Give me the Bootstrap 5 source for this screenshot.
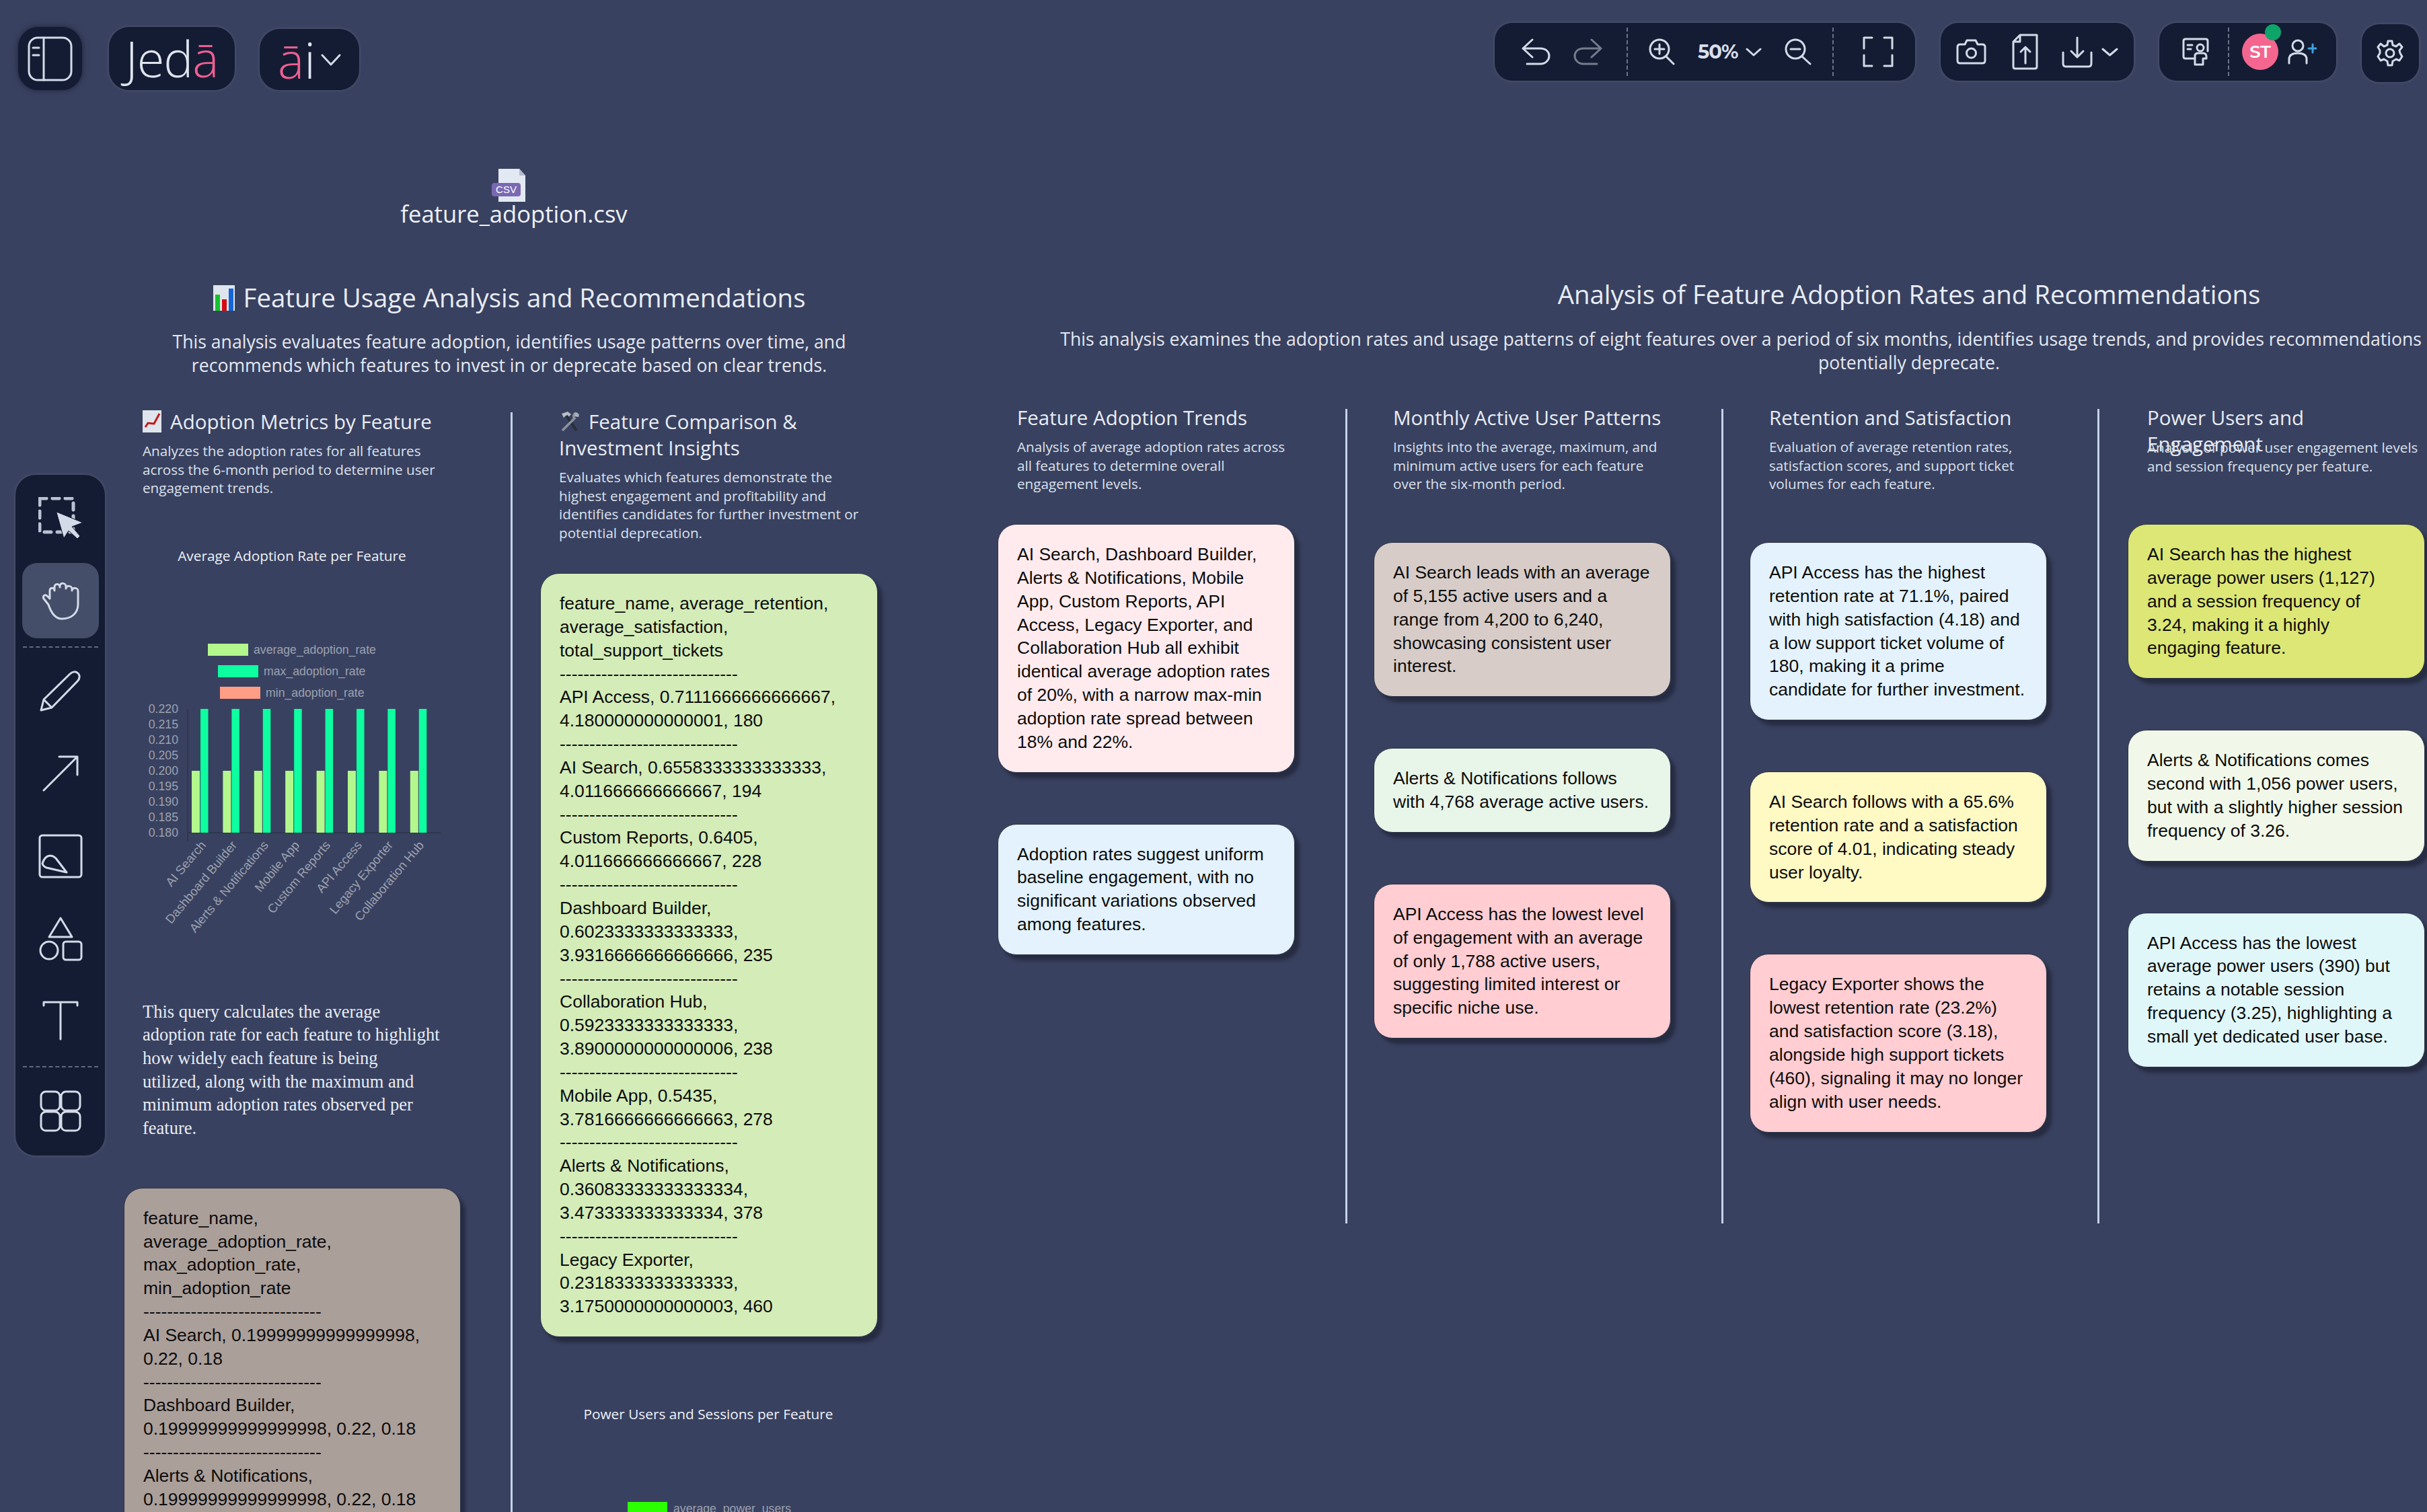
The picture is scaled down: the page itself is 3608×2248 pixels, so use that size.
<!DOCTYPE html>
<html lang="en">
<head>
  <meta charset="UTF-8">
  <title>Jedai canvas</title>
  <link href="https://cdn.jsdelivr.net/npm/bootstrap@5.3.0/dist/css/bootstrap.min.css" rel="stylesheet">
  <style>
    html, body { margin: 0; height: 100%; overflow: hidden; background: #394160; }
    .board { width: 3608px; height: 2248px; position: relative; overflow: hidden; background: #394160; font-family: "Open Sans", "Noto Sans", sans-serif; color: #e8edf5; }

    /* top bars */
    .top-strip { padding: 34px 12px 0 27px; }
    .dark-pill { background: #141c33; box-shadow: 0 0 5px rgba(255,255,255,.14); border-radius: 26px; }
    .ic { stroke: #d3dbe9; fill: none; stroke-width: 3; stroke-linecap: round; stroke-linejoin: round; display: block; flex: none; }
    .side-btn { width: 95px; height: 94px; margin-top: 6px; border-radius: 30px; box-shadow: 0 0 8px rgba(10,15,30,.6); }
    .logo-btn { width: 187px; height: 94px; margin: 6px 0 0 40px; border-radius: 30px; font-size: 74px; font-weight: 350; line-height: 1; color: #dfe5ef; letter-spacing: -1px; }
    .ai-btn { width: 148px; height: 91px; margin: 9px 0 0 37px; border-radius: 30px; font-size: 74px; font-weight: 350; line-height: 1; color: #dfe5ef; }
    .pink-txt { color: #ee5f92; }
    .bar-group { height: 86px; gap: 0; }
    .g-hist { width: 625px; }
    .g-file { width: 287px; padding-left: 23px; }
    .g-share { width: 263px; padding-left: 34px; }
    .g-gear { width: 85px; padding-left: 22px; margin-top: 2px; }
    .right-cluster { gap: 38px; }
    .seg-a { width: 196px; padding-left: 40px; gap: 34px; }
    .seg-b { width: 304px; padding-left: 31px; gap: 34px; }
    .seg-c { padding-left: 43px; }
    .dash-sep { height: 72px; width: 0; border-left: 2px dashed #6a7389; flex: none; }
    .zoom-val { font-family: "Montserrat", "Inter", sans-serif; font-weight: 700; font-size: 29px; color: #d8dfec; width: 59px; letter-spacing: -1px; }
    .chev-tight { margin-left: -22px; }
    .ml-38 { margin-left: 38px; }
    .ml-35 { margin-left: 35px; }
    .ml-13 { margin-left: 13px; }
    .ml-28 { margin-left: 28px; }
    .ml-19 { margin-left: 19px; }
    .ml-14 { margin-left: 14px; }
    .user-dot { width: 54px; height: 54px; border-radius: 50%; background: #f4668f; color: #fff; font-family: "Montserrat", "Inter", sans-serif; font-size: 26px; font-weight: 600; position: relative; flex: none; }
    .online-dot { position: absolute; width: 24px; height: 24px; border-radius: 50%; background: #0ea56a; top: -14px; right: -4px; }

    /* tool rail */
    .tool-rail { left: 23px; top: 706px; width: 133px; height: 1012px; border-radius: 30px; }
    .tool-cell { width: 100%; flex: none; }
    .h-131 { height: 131px; }
    .h-123 { height: 123px; }
    .h-120 { height: 120px; }
    .h-130 { height: 130px; }
    .tool-on { width: 114px; height: 112px; flex: none; background: #454e68; border-radius: 22px; }
    .rail-sep { width: 112px; flex: none; border-top: 2px dashed #5f6980; }
    .rail-sep-a { margin-top: 12px; margin-bottom: 2px; }
    .rail-sep-b { margin-top: 8px; }

    /* file node */
    .file-node { left: 594px; top: 251px; width: 340px; }
    .file-name { font-size: 34.6px; line-height: 33px; font-weight: 500; color: #eef2f8; white-space: nowrap; }
    .file-ico { margin-left: -16px; }

    /* analysis sections */
    .sec-left { left: 184px; top: 417px; width: 1146px; }
    .sec-right { left: 1483px; top: 412px; width: 2710px; }
    .sec-title { font-size: 38.4px; line-height: 50px; font-weight: 400; margin: 0; color: #e8edf5; }
    .sec-intro { font-size: 26.6px; line-height: 35px; margin: 0; color: #e4e9f2; }
    .sec-left .sec-intro { margin-top: 24px; }
    .sec-right .sec-intro { margin-top: 25px; }
    .sec-left .col-row { margin-top: 46px; }
    .sec-right .col-row { margin-top: 51px; }
    .emoji-ico { display: inline-block; vertical-align: -5px; margin-right: 13px; }

    .col-row { display: flex; align-items: stretch; }
    .col-wide { width: 500px; flex: none; }
    .col-std { width: 442px; flex: none; }
    .rule-v { width: 3px; flex: none; background: #c5d3e8; }
    .sec-left .rule-v { margin: 6px 41px 0 75px; height: 1900px; }
    .sec-right .rule-v { margin: 0 39px 0 75px; height: 1211px; }
    .sec-right .rule-last { margin-right: 42px; }

    .col-title { font-size: 29.5px; line-height: 39px; font-weight: 400; margin: 0; color: #e8edf5; }
    .col-note { font-size: 20.7px; line-height: 27.5px; margin: 0; color: #dbe2ed; }
    .pad-text { padding-left: 29px; }
    .sec-left .pad-text { padding-left: 28px; }
    .sec-left .col-note { margin-top: 11px; }
    .sec-right .col-title { height: 48px; }
    .sec-right .col-note { margin-top: 2px; }
    .col-head-a { height: 178px; margin-top: -7px; }
    .col-head-b { height: 205px; margin-top: -7px; }
    .w-title { width: 390px; }
    .sec-right .col-note-power { margin-top: 3px; }

    .note-stack { display: flex; flex-direction: column; gap: 76px; }
    .note-box { border: 1px solid #2c3146; border-radius: 28px; box-shadow: 7px 8px 5px #262c42; color: #0c0c0c; font-family: "Liberation Sans", Arial, sans-serif; font-size: 26.5px; line-height: 34.85px; }
    .note-box .card-body { padding: 27px 28px; }
    .bg-rose { background: #ffebee; }
    .bg-sky { background: #e3f2fd; }
    .bg-taupe { background: #d7ccc8; }
    .bg-mint { background: #e8f5e9; }
    .bg-salmon { background: #ffcdd2; }
    .bg-butter { background: #fff9c4; }
    .bg-lime { background: #dce775; }
    .bg-pale { background: #f1f8e9; }
    .bg-aqua { background: #e0f7fa; }
    .bg-leaf { background: #d4ecb8; }
    .bg-tan { background: #ab9f9a; }

    .chart-a { display: block; margin-top: 61px; }
    .chart-b { display: block; margin-top: 72px; }
    .chart-head { font-family: "Open Sans", sans-serif; font-size: 20.8px; fill: #eef2f8; text-anchor: middle; }
    .chart-tick { font-family: "Liberation Sans", Arial, sans-serif; font-size: 17.7px; fill: #9ba1af; }
    .chart-cat { font-family: "Liberation Sans", Arial, sans-serif; font-size: 18.5px; fill: #9ba1af; }
    .query-note { font-family: "Liberation Serif", "Times New Roman", serif; font-size: 26.5px; line-height: 34.7px; color: #e8edf5; margin: 26px 0 0 28px; }
    .data-box { width: 501px; margin-top: 71px; }
    .data-box-b { width: 502px; margin-top: 46px; }
    .data-box .card-body, .data-box-b .card-body { padding: 27px 28px; }
  </style>
</head>
<body>
<div class="board">

  <!-- left section -->
  <section class="position-absolute sec-left">
    <h2 class="sec-title text-center">
      <svg class="emoji-ico" width="32" height="38" viewBox="0 0 32 38"><rect width="32" height="38" fill="#dfe5ec"/><rect x="3" y="14" width="7" height="24" fill="#17c22c"/><rect x="13" y="21" width="7" height="17" fill="#d40d12"/><rect x="23" y="5" width="7" height="33" fill="#1565d8"/></svg>Feature Usage Analysis and Recommendations
    </h2>
    <p class="sec-intro text-center">This analysis evaluates feature adoption, identifies usage patterns over time, and<br>recommends which features to invest in or deprecate based on clear trends.</p>
    <div class="col-row">
      <div class="col-wide">
        <div class="pad-text">
          <h3 class="col-title"><svg class="emoji-ico" width="28" height="33" viewBox="0 0 28 33"><rect width="28" height="33" fill="#dfe5ec"/><path d="M4 25 L8 19 L17 20 L25 5" fill="none" stroke="#c9161a" stroke-width="3"/></svg>Adoption Metrics by Feature</h3>
          <p class="col-note">Analyzes the adoption rates for all features<br>across the 6-month period to determine user<br>engagement trends.</p>
        </div>
        <svg class="chart-a" width="500" height="660" viewBox="184 800 500 660">
          <text class="chart-head" x="434" y="833">Average Adoption Rate per Feature</text>
          <rect x="309" y="956" width="60" height="18" fill="#b3f78d"/>
          <text class="chart-tick" x="377" y="971">average_adoption_rate</text>
          <rect x="324" y="988" width="60" height="18" fill="#0dffa0"/>
          <text class="chart-tick" x="392" y="1003">max_adoption_rate</text>
          <rect x="327" y="1020" width="60" height="18" fill="#ff9d85"/>
          <text class="chart-tick" x="395" y="1035">min_adoption_rate</text>
          <path d="M279 1053V1250M279 1237H655" stroke="#2f3650" stroke-width="2" fill="none"/>
          <g text-anchor="end">
            <text class="chart-tick" x="265" y="1059">0.220</text>
            <text class="chart-tick" x="265" y="1082">0.215</text>
            <text class="chart-tick" x="265" y="1105">0.210</text>
            <text class="chart-tick" x="265" y="1128">0.205</text>
            <text class="chart-tick" x="265" y="1151">0.200</text>
            <text class="chart-tick" x="265" y="1174">0.195</text>
            <text class="chart-tick" x="265" y="1197">0.190</text>
            <text class="chart-tick" x="265" y="1220">0.185</text>
            <text class="chart-tick" x="265" y="1243">0.180</text>
          </g>
          <g fill="#b3f78d">
            <rect x="285" y="1145" width="12" height="92"/><rect x="331.4" y="1145" width="12" height="92"/><rect x="377.8" y="1145" width="12" height="92"/><rect x="424.2" y="1145" width="12" height="92"/><rect x="470.6" y="1145" width="12" height="92"/><rect x="517" y="1145" width="12" height="92"/><rect x="563.4" y="1145" width="12" height="92"/><rect x="609.8" y="1145" width="12" height="92"/>
          </g>
          <g fill="#0dffa0">
            <rect x="298" y="1053" width="11.5" height="184"/><rect x="344.4" y="1053" width="11.5" height="184"/><rect x="390.8" y="1053" width="11.5" height="184"/><rect x="437.2" y="1053" width="11.5" height="184"/><rect x="483.6" y="1053" width="11.5" height="184"/><rect x="530" y="1053" width="11.5" height="184"/><rect x="576.4" y="1053" width="11.5" height="184"/><rect x="622.8" y="1053" width="11.5" height="184"/>
          </g>
          <g text-anchor="end">
            <text class="chart-cat" transform="translate(307 1256) rotate(-50)">AI Search</text>
            <text class="chart-cat" transform="translate(353 1256) rotate(-50)">Dashboard Builder</text>
            <text class="chart-cat" transform="translate(400 1256) rotate(-50)">Alerts &amp; Notifications</text>
            <text class="chart-cat" transform="translate(446 1256) rotate(-50)">Mobile App</text>
            <text class="chart-cat" transform="translate(492 1256) rotate(-50)">Custom Reports</text>
            <text class="chart-cat" transform="translate(539 1256) rotate(-50)">API Access</text>
            <text class="chart-cat" transform="translate(585 1256) rotate(-50)">Legacy Exporter</text>
            <text class="chart-cat" transform="translate(631 1256) rotate(-50)">Collaboration Hub</text>
          </g>
        </svg>
        <p class="query-note">This query calculates the average<br>adoption rate for each feature to highlight<br>how widely each feature is being<br>utilized, along with the maximum and<br>minimum adoption rates observed per<br>feature.</p>
        <div class="card note-box bg-tan data-box"><div class="card-body">feature_name,<br>average_adoption_rate,<br>max_adoption_rate,<br>min_adoption_rate<br>------------------------------<br>AI Search, 0.19999999999999998,<br>0.22, 0.18<br>------------------------------<br>Dashboard Builder,<br>0.19999999999999998, 0.22, 0.18<br>------------------------------<br>Alerts &amp; Notifications,<br>0.19999999999999998, 0.22, 0.18<br>------------------------------<br>Mobile App, 0.19999999999999998,<br>0.22, 0.18</div></div>
      </div>
      <div class="rule-v"></div>
      <div class="col-wide">
        <div class="pad-text">
          <h3 class="col-title"><svg class="emoji-ico" width="31" height="32" viewBox="0 0 31 32"><path d="M4 4 L13 1 L18 5 L14 9 L10 7 L7 10Z" fill="#b9bec6"/><path d="M11 7 L26 29" stroke="#28303a" stroke-width="4"/><path d="M25 3 C21 5 21 9 23 11 L5 29" fill="none" stroke="#8d939c" stroke-width="3.5"/><path d="M24 2 L23 8 L29 9 C31 6 29 2 24 2Z" fill="#aab0b8"/></svg>Feature Comparison &amp;<br>Investment Insights</h3>
          <p class="col-note">Evaluates which features demonstrate the<br>highest engagement and profitability and<br>identifies candidates for further investment or<br>potential deprecation.</p>
        </div>
        <div class="card note-box bg-leaf data-box-b"><div class="card-body">feature_name, average_retention,<br>average_satisfaction,<br>total_support_tickets<br>------------------------------<br>API Access, 0.7111666666666667,<br>4.180000000000001, 180<br>------------------------------<br>AI Search, 0.6558333333333333,<br>4.011666666666667, 194<br>------------------------------<br>Custom Reports, 0.6405,<br>4.011666666666667, 228<br>------------------------------<br>Dashboard Builder,<br>0.6023333333333333,<br>3.9316666666666666, 235<br>------------------------------<br>Collaboration Hub,<br>0.5923333333333333,<br>3.8900000000000006, 238<br>------------------------------<br>Mobile App, 0.5435,<br>3.7816666666666663, 278<br>------------------------------<br>Alerts &amp; Notifications,<br>0.36083333333333334,<br>3.473333333333334, 378<br>------------------------------<br>Legacy Exporter,<br>0.2318333333333333,<br>3.1750000000000003, 460</div></div>
        <svg class="chart-b" width="502" height="188" viewBox="803 2060 502 188">
          <text class="chart-head" x="1053" y="2110">Power Users and Sessions per Feature</text>
          <rect x="933" y="2233" width="59" height="18" fill="#2cff00"/>
          <text class="chart-tick" x="1001" y="2249">average_power_users</text>
        </svg>
      </div>
    </div>
  </section>

  <!-- right section -->
  <section class="position-absolute sec-right">
    <h2 class="sec-title text-center">Analysis of Feature Adoption Rates and Recommendations</h2>
    <p class="sec-intro text-center">This analysis examines the adoption rates and usage patterns of eight features over a period of six months, identifies usage trends, and provides recommendations on which features to further invest in or<br>potentially deprecate.</p>
    <div class="col-row">
      <div class="col-std">
        <div class="col-head-a pad-text">
          <h3 class="col-title">Feature Adoption Trends</h3>
          <p class="col-note">Analysis of average adoption rates across<br>all features to determine overall<br>engagement levels.</p>
        </div>
        <div class="note-stack">
          <div class="card note-box bg-rose"><div class="card-body">AI Search, Dashboard Builder, Alerts &amp; Notifications, Mobile App, Custom Reports, API Access, Legacy Exporter, and Collaboration Hub all exhibit identical average adoption rates of 20%, with a narrow max-min adoption rate spread between 18% and 22%.</div></div>
          <div class="card note-box bg-sky"><div class="card-body">Adoption rates suggest uniform baseline engagement, with no significant variations observed among features.</div></div>
        </div>
      </div>
      <div class="rule-v"></div>
      <div class="col-std">
        <div class="col-head-b pad-text">
          <h3 class="col-title">Monthly Active User Patterns</h3>
          <p class="col-note">Insights into the average, maximum, and<br>minimum active users for each feature<br>over the six-month period.</p>
        </div>
        <div class="note-stack">
          <div class="card note-box bg-taupe"><div class="card-body">AI Search leads with an average of 5,155 active users and a range from 4,200 to 6,240, showcasing consistent user interest.</div></div>
          <div class="card note-box bg-mint"><div class="card-body">Alerts &amp; Notifications follows with 4,768 average active users.</div></div>
          <div class="card note-box bg-salmon"><div class="card-body">API Access has the lowest level of engagement with an average of only 1,788 active users, suggesting limited interest or specific niche use.</div></div>
        </div>
      </div>
      <div class="rule-v"></div>
      <div class="col-std">
        <div class="col-head-b pad-text">
          <h3 class="col-title">Retention and Satisfaction</h3>
          <p class="col-note">Evaluation of average retention rates,<br>satisfaction scores, and support ticket<br>volumes for each feature.</p>
        </div>
        <div class="note-stack">
          <div class="card note-box bg-sky"><div class="card-body">API Access has the highest retention rate at 71.1%, paired with high satisfaction (4.18) and a low support ticket volume of 180, making it a prime<br>candidate for further investment.</div></div>
          <div class="card note-box bg-butter"><div class="card-body">AI Search follows with a 65.6% retention rate and a satisfaction score of 4.01, indicating steady user loyalty.</div></div>
          <div class="card note-box bg-salmon"><div class="card-body">Legacy Exporter shows the lowest retention rate (23.2%) and satisfaction score (3.18), alongside high support tickets (460), signaling it may no longer align with user needs.</div></div>
        </div>
      </div>
      <div class="rule-v rule-last"></div>
      <div class="col-std">
        <div class="col-head-a pad-text">
          <h3 class="col-title w-title">Power Users and Engagement</h3>
          <p class="col-note col-note-power">Analysis of power user engagement levels<br>and session frequency per feature.</p>
        </div>
        <div class="note-stack">
          <div class="card note-box bg-lime"><div class="card-body">AI Search has the highest average power users (1,127) and a session frequency of<br>3.24, making it a highly engaging feature.</div></div>
          <div class="card note-box bg-pale"><div class="card-body">Alerts &amp; Notifications comes second with 1,056 power users, but with a slightly higher session frequency of 3.26.</div></div>
          <div class="card note-box bg-aqua"><div class="card-body">API Access has the lowest average power users (390) but retains a notable session frequency (3.25), highlighting a small yet dedicated user base.</div></div>
        </div>
      </div>
    </div>
  </section>

  <!-- uploaded file -->
  <div class="position-absolute file-node d-flex flex-column align-items-center">
    <svg class="file-ico" width="50" height="50" viewBox="0 0 50 50">
      <path d="M10 0H41L50 10V49H10Z" fill="#e3e9f3"/><path d="M41 0V10H50Z" fill="#b5bdcc"/>
      <rect y="21" width="43" height="20" rx="4" fill="#7a68b4"/>
      <text x="21.5" y="36" text-anchor="middle" font-family="Liberation Sans, Arial, sans-serif" font-size="15" fill="#fff">CSV</text>
    </svg>
    <div class="file-name">feature_adoption.csv</div>
  </div>

  <!-- top bars -->
  <div class="position-absolute top-0 start-0 end-0 d-flex justify-content-between align-items-start top-strip">
    <div class="d-flex align-items-start">
      <button type="button" class="btn p-0 dark-pill side-btn d-flex align-items-center justify-content-center">
        <svg class="ic" width="67" height="67" viewBox="0 0 67 67"><rect x="2" y="2" width="63" height="63" rx="13"/><path d="M24 2V65M8 17H17M8 28H17"/></svg>
      </button>
      <div class="dark-pill logo-btn d-flex align-items-center justify-content-center"><span>Jed<span class="pink-txt">ā</span></span></div>
      <div class="dark-pill ai-btn d-flex align-items-center justify-content-center gap-2">
        <span><span class="pink-txt">ā</span>i</span>
        <svg class="ic" width="30" height="18" viewBox="0 0 30 18"><path d="M2 2L15 16L28 2"/></svg>
      </div>
    </div>
    <div class="d-flex align-items-start right-cluster">
      <div class="dark-pill bar-group g-hist d-flex align-items-center">
        <div class="seg-a d-flex align-items-center">
          <svg class="ic" width="43" height="40" viewBox="0 0 43 40"><path d="M16 2L2 15L16 28M2 15H28C36 15 41 20 41 26S36 38 28 38H8"/></svg>
          <svg class="ic opacity-50" width="43" height="40" viewBox="0 0 43 40"><path d="M27 2L41 15L27 28M41 15H15C7 15 2 20 2 26S7 38 15 38H35"/></svg>
        </div>
        <div class="dash-sep"></div>
        <div class="seg-b d-flex align-items-center">
          <svg class="ic" width="39" height="40" viewBox="0 0 39 40"><circle cx="16" cy="16" r="14"/><path d="M26 27L37 38M16 9V23M9 16H23"/></svg>
          <div class="zoom-val">50%</div>
          <svg class="ic chev-tight" width="24" height="13" viewBox="0 0 24 13"><path d="M2 2L12 11L22 2"/></svg>
          <svg class="ic" width="41" height="40" viewBox="0 0 41 40"><circle cx="16" cy="16" r="14"/><path d="M26 27L38 38M9 16H23"/></svg>
        </div>
        <div class="dash-sep"></div>
        <div class="seg-c">
          <svg class="ic" width="46" height="46" viewBox="0 0 46 46"><path d="M14 2H2V18M32 2H44V18M2 28V44H14M44 28V44H32"/></svg>
        </div>
      </div>
      <div class="dark-pill bar-group g-file d-flex align-items-center">
        <svg class="ic" width="45" height="38" viewBox="0 0 45 38"><path d="M6 8H13L16 2H29L32 8H39C42 8 43 10 43 12V32C43 35 41 36 39 36H6C3 36 2 34 2 32V12C2 10 3 8 6 8Z"/><circle cx="22.500" cy="21" r="7"/></svg>
        <svg class="ic ml-38" width="39" height="54" viewBox="0 0 39 54"><path d="M2 12L12 2H37V49C37 51 36 52 34 52H5C3 52 2 51 2 49ZM12 2V12H2M20 44V20M13 27L20 20L27 27"/></svg>
        <svg class="ic ml-35" width="46" height="47" viewBox="0 0 46 47"><path d="M23 2V30M14 22L23 31L32 22M2 24V40C2 43 3 45 6 45H40C43 45 44 43 44 40V24"/></svg>
        <svg class="ic ml-13" width="25" height="13" viewBox="0 0 25 13"><path d="M2 2L12.500 11L23 2"/></svg>
      </div>
      <div class="dark-pill bar-group g-share d-flex align-items-center">
        <svg class="ic" width="40" height="42" viewBox="0 0 40 42"><path d="M17 31H5C3 31 2 30 2 28V5C2 3 3 2 5 2H35C37 2 38 3 38 5V20M8 11H15M8 17H13"/><circle cx="27" cy="15" r="5"/><path d="M19 40V27C19 24 21 23 24 23H31C35 23 36 25 36 28V31H31V40Z"/></svg>
        <div class="dash-sep ml-28"></div>
        <div class="user-dot ml-19 d-flex align-items-center justify-content-center">ST<span class="online-dot"></span></div>
        <svg class="ic ml-14" width="43" height="38" viewBox="0 0 43 38"><circle cx="15" cy="10" r="8"/><path d="M2 36V30C2 24 7 21 15 21S28 24 28 30V36"/><path d="M37 8V20M31 14H43" stroke="#3ea0e0"/></svg>
      </div>
      <div class="dark-pill bar-group g-gear d-flex align-items-center">
        <svg class="ic" width="40" height="40" viewBox="0 0 40 40"><circle cx="20" cy="20" r="6"/><path d="M17 2H23L24 8L29 10L34 6L38 11L34 16L35 20L38 25L34 31L29 29L24 32L23 38H17L16 32L11 29L6 31L2 25L5 20L5 16L2 11L6 6L11 10L16 8Z"/></svg>
      </div>
    </div>
  </div>

  <!-- tool rail -->
  <nav class="position-absolute dark-pill tool-rail d-flex flex-column align-items-center">
    <div class="tool-cell h-131 d-flex align-items-center justify-content-center">
      <svg class="ic" width="66" height="66" viewBox="0 0 66 66"><rect x="2" y="2" width="50" height="50" stroke-width="5" stroke-dasharray="10 9" stroke="#b9c2d2"/><path d="M27 22L66 38L50 44L62 58L58 62L45 50L38 61Z" fill="#d3dbe9" stroke="#141c33" stroke-width="1"/></svg>
    </div>
    <div class="tool-on d-flex align-items-center justify-content-center">
      <svg class="ic" width="56" height="58" viewBox="0 0 56 58"><path d="M10 35L3 26C1 22 5 19 8 22L12 26V14C12 9 19 9 19 14V9C19 3 27 3 27 9V7C27 2 36 2 36 8V11C36 6 45 6 45 12V14C45 9 54 9 54 15V34C54 48 44 56 30 56C20 56 14 47 10 35Z"/></svg>
    </div>
    <div class="rail-sep rail-sep-a"></div>
    <div class="tool-cell h-123 d-flex align-items-center justify-content-center">
      <svg class="ic" width="62" height="62" viewBox="0 0 62 62" stroke-width="4"><path d="M2 60L6 44L45 6C49 2 54 2 57 5S60 13 56 17L18 56ZM6 44L18 56"/></svg>
    </div>
    <div class="tool-cell h-123 d-flex align-items-center justify-content-center">
      <svg class="ic" width="54" height="54" viewBox="0 0 54 54" stroke-width="4"><path d="M2 52L52 2M25 2H52V29"/></svg>
    </div>
    <div class="tool-cell h-123 d-flex align-items-center justify-content-center">
      <svg class="ic" width="66" height="66" viewBox="0 0 66 66" stroke-width="4"><rect x="2" y="2" width="62" height="62" rx="4"/><path d="M6 44C10 30 20 30 26 36L42 57L12 50C9 49 7 47 6 44Z"/></svg>
    </div>
    <div class="tool-cell h-123 d-flex align-items-center justify-content-center">
      <svg class="ic" width="66" height="66" viewBox="0 0 66 66" stroke-width="4"><path d="M33 2L50 30H16Z"/><circle cx="16" cy="50" r="13"/><rect x="37" y="37" width="27" height="27" rx="4"/></svg>
    </div>
    <div class="tool-cell h-120 d-flex align-items-center justify-content-center">
      <svg class="ic" width="54" height="60" viewBox="0 0 54 60" stroke-width="5"><path d="M2 8V3H52V8M27 3V58"/></svg>
    </div>
    <div class="rail-sep rail-sep-b"></div>
    <div class="tool-cell h-130 d-flex align-items-center justify-content-center">
      <svg class="ic" width="62" height="62" viewBox="0 0 62 62" stroke-width="4"><rect x="2" y="2" width="28" height="28" rx="7"/><rect x="32" y="2" width="28" height="28" rx="7"/><rect x="2" y="32" width="28" height="28" rx="7"/><rect x="32" y="32" width="28" height="28" rx="7"/></svg>
    </div>
  </nav>
</div>
<script src="https://cdn.jsdelivr.net/npm/bootstrap@5.3.0/dist/js/bootstrap.bundle.min.js"></script>
</body>
</html>
